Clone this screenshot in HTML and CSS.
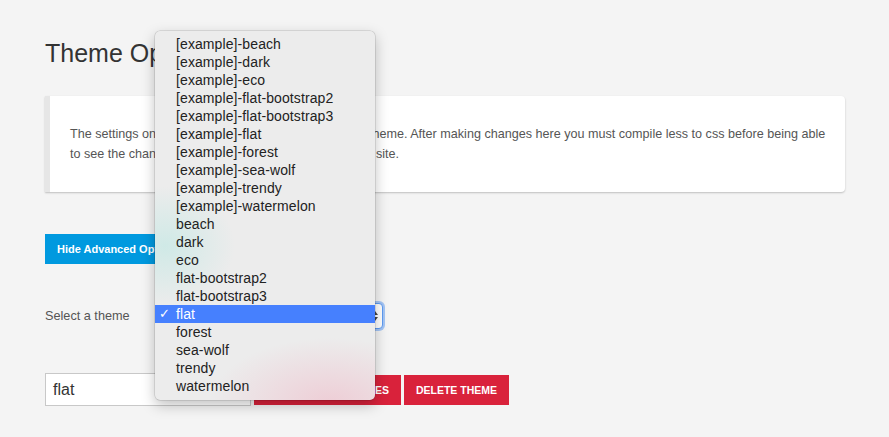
FILE: index.html
```html
<!DOCTYPE html>
<html>
<head>
<meta charset="utf-8">
<link rel="stylesheet" href="styles.css">
</head>
<body>
<div class="page">
  <h1 class="title">Theme Options</h1>
  <div class="card">
    <p class="card-text">The settings on this page are used to customize your theme. After making changes here you must compile less to css before being able to see the changes reflected onto the front end of your site.</p>
  </div>
  <button class="btn btn-blue">Hide Advanced Options</button>
  <div class="select-row">
    <span class="label">Select a theme</span>
    <div class="select">
      <span class="select-value">flat</span>
      <span class="arrows"><span class="up"></span><span class="down"></span></span>
    </div>
  </div>
  <div class="action-row">
    <div class="input">flat</div>
    <button class="btn btn-red">Save Theme Changes</button>
    <button class="btn btn-red">Delete Theme</button>
  </div>
</div>
<ul class="dropdown">
  <li>[example]-beach</li>
  <li>[example]-dark</li>
  <li>[example]-eco</li>
  <li>[example]-flat-bootstrap2</li>
  <li>[example]-flat-bootstrap3</li>
  <li>[example]-flat</li>
  <li>[example]-forest</li>
  <li>[example]-sea-wolf</li>
  <li>[example]-trendy</li>
  <li>[example]-watermelon</li>
  <li>beach</li>
  <li>dark</li>
  <li>eco</li>
  <li>flat-bootstrap2</li>
  <li>flat-bootstrap3</li>
  <li class="selected"><span class="check">✓</span>flat</li>
  <li>forest</li>
  <li>sea-wolf</li>
  <li>trendy</li>
  <li>watermelon</li>
</ul>
</body>
</html>
```

FILE: styles.css
```css
html, body {
  margin: 0;
  padding: 0;
  background: #f4f4f4;
  font-family: "Liberation Sans", Arial, sans-serif;
  color: #555;
}
.page {
  padding: 35px 44px 0 45px;
}
.title {
  margin: 0;
  font-size: 25px;
  line-height: 36px;
  font-weight: normal;
  color: #333;
}
.card {
  margin-top: 25px;
  background: #fff;
  border-left: 5px solid #e6e6e6;
  border-radius: 0 4px 4px 0;
  box-shadow: 0 1px 2px rgba(0,0,0,0.22);
  padding: 28px 17px 28px 20px;
}
.card-text {
  margin: 0;
  font-size: 12.6px;
  line-height: 20px;
  color: #555;
}
.btn {
  display: block;
  border: none;
  font-family: "Liberation Sans", Arial, sans-serif;
  font-weight: bold;
  color: #fff;
  height: 30px;
  padding: 0 12px;
  cursor: pointer;
}
.btn-blue {
  margin-top: 42px;
  background: #0099df;
  font-size: 11px;
}
.btn-red {
  background: #d9223b;
  font-size: 10.5px;
  text-transform: uppercase;
}
.select-row {
  margin-top: 37px;
  display: flex;
  align-items: center;
  height: 30px;
}
.label {
  width: 110px;
  font-size: 12.7px;
}
.select {
  width: 226px;
  height: 26px;
  box-sizing: border-box;
  background: #fff;
  border: 1px solid #5d9bf2;
  border-radius: 4px;
  box-shadow: 0 0 0 2px rgba(110,165,245,0.6);
  display: flex;
  align-items: center;
  justify-content: space-between;
  padding: 0 4px 0 8px;
  margin-left: 2px;
}
.select-value {
  font-size: 13px;
  color: #333;
}
.arrows {
  display: flex;
  flex-direction: column;
  gap: 2px;
}
.up, .down {
  width: 0;
  height: 0;
  border-left: 3px solid transparent;
  border-right: 3px solid transparent;
}
.up { border-bottom: 4px solid #444; }
.down { border-top: 4px solid #444; }
.action-row {
  margin-top: 42px;
  display: flex;
  align-items: center;
  gap: 3px;
}
.input {
  width: 197px;
  height: 31px;
  border: 1px solid #c8c8c8;
  background: #fff;
  font-size: 16px;
  line-height: 31px;
  padding-left: 7px;
  color: #333;
}
.dropdown {
  position: absolute;
  left: 155px;
  top: 31px;
  width: 220px;
  margin: 0;
  padding: 4px 0 5px;
  list-style: none;
  border-radius: 5px;
  background:
    radial-gradient(ellipse 70px 60px at 10px 215px, rgba(195,232,228,0.7), rgba(195,232,228,0) 100%),
    radial-gradient(ellipse 120px 65px at 175px 372px, rgba(238,200,210,0.85), rgba(238,200,210,0) 100%),
    #ececec;
  box-shadow: 0 0 0 0.5px rgba(0,0,0,0.18), 0 5px 14px rgba(0,0,0,0.25);
  font-family: "Liberation Sans", Arial, sans-serif;
  font-size: 14px;
  letter-spacing: 0.1px;
  color: #222;
}
.dropdown li {
  height: 18px;
  line-height: 18px;
  padding-left: 21px;
  position: relative;
}
.dropdown li.selected {
  background: #4680fe;
  color: #fff;
}
.check {
  position: absolute;
  left: 4px;
  top: 0;
  font-family: "DejaVu Sans", sans-serif;
  font-size: 13px;
  font-weight: bold;
}
```
